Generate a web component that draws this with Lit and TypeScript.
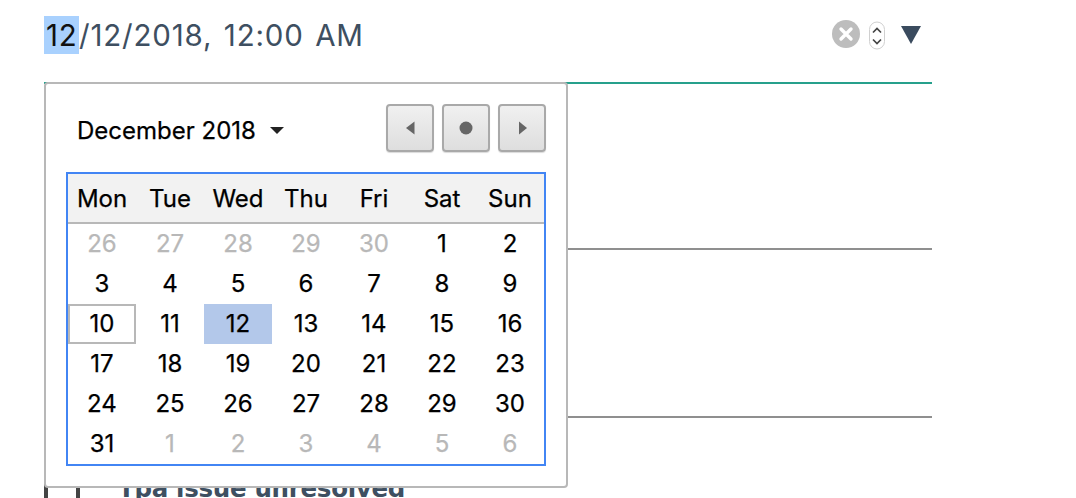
import { LitElement, html, css } from "lit";
import { customElement } from "lit/decorators.js";

const headers = ["Mon", "Tue", "Wed", "Thu", "Fri", "Sat", "Sun"];
const days: [number, boolean][] = [
  ...[26, 27, 28, 29, 30].map((d) => [d, true] as [number, boolean]),
  ...Array.from({ length: 31 }, (_, i) => [i + 1, false] as [number, boolean]),
  ...[1, 2, 3, 4, 5, 6].map((d) => [d, true] as [number, boolean]),
];

@customElement("app-root")
export class AppRoot extends LitElement {
  static styles = css`
    :host {
      display: block;
      position: relative;
      width: 1076px;
      height: 498px;
      overflow: hidden;
      background: #fff;
      font-family: "Inter", "Liberation Sans", sans-serif;
    }
    .page {
      margin-left: 44px;
      width: 888px;
      display: flex;
      flex-direction: column;
    }
    .field {
      height: 84px;
      box-sizing: border-box;
      border-bottom: 2px solid #26a08c;
      display: flex;
      align-items: flex-start;
      padding-top: 16px;
    }
    .value {
      font-size: 29.500px;
      line-height: 38px;
      color: #3e4f61;
      flex: 1;
      white-space: pre;
      letter-spacing: 0.8px;
    }
    .sel {
      background: #a9d1fe;
      color: #111;
      display: inline-block;
      padding: 0 1.500px 0 2px;
    }
    .gap {
      margin-left: 2.500px;
    }
    .controls {
      display: flex;
      align-items: center;
      height: 38px;
      margin-right: 11px;
    }
    .controls svg {
      display: block;
    }
    .clear {
      margin-right: 8px;
      margin-bottom: 2px;
    }
    .spin {
      margin-right: 15px;
      margin-top: 2px;
    }
    .line {
      height: 166px;
      border-bottom: 2px solid #8f8f8f;
    }
    .first {
      height: 164px;
    }
    .issue {
      height: 66px;
      display: flex;
      align-items: flex-end;
    }
    .check {
      width: 36px;
      height: 20px;
      box-sizing: border-box;
      margin-bottom: -14px;
      border-left: 4px solid #444;
      border-right: 4px solid #444;
      flex: none;
    }
    .issue b {
      margin-left: 38px;
      font-size: 24.500px;
      line-height: 28px;
      margin-bottom: -19px;
      color: #3e4f61;
      font-family: "DejaVu Sans", sans-serif;
      letter-spacing: -0.3px;
      white-space: nowrap;
    }
    .popup {
      position: absolute;
      left: 44px;
      top: 82px;
      width: 524px;
      height: 406px;
      box-sizing: border-box;
      background: #fff;
      border: 2px solid #b8b8b8;
      border-radius: 4px;
      padding: 20px;
      display: flex;
      flex-direction: column;
      color: #000;
      -webkit-text-stroke: 0.25px currentColor;
    }
    .top {
      height: 48px;
      display: flex;
      align-items: center;
      justify-content: space-between;
      margin-bottom: 20px;
    }
    .month {
      display: flex;
      align-items: center;
      gap: 14px;
      margin-left: 11px;
      padding-top: 4px;
      font-size: 24px;
    }
    .month i {
      width: 0;
      height: 0;
      border-left: 7px solid transparent;
      border-right: 7px solid transparent;
      border-top: 7px solid #222;
    }
    .nav {
      display: flex;
      gap: 8px;
    }
    .btn {
      width: 48px;
      height: 48px;
      box-sizing: border-box;
      border: 2px solid #a9a9a9;
      border-radius: 4px;
      background: linear-gradient(#f0f0f0, #dedede);
      box-shadow: 0 1px 1px rgba(0, 0, 0, 0.15);
      display: flex;
      align-items: center;
      justify-content: center;
    }
    .cal {
      width: 480px;
      box-sizing: border-box;
      border: 2px solid #4285f4;
    }
    .grid {
      display: grid;
      grid-template-columns: repeat(7, 68px);
    }
    .head {
      height: 50px;
      box-sizing: border-box;
      background: #f2f2f2;
      border-bottom: 2px solid #b8b8b8;
      align-items: center;
    }
    .head span,
    .d {
      text-align: center;
      font-size: 24px;
    }
    .d {
      height: 40px;
      line-height: 40px;
      box-sizing: border-box;
    }
    .out {
      color: #b8b8b8;
    }
    .today {
      line-height: 36px;
      border: 2px solid #b8b8b8;
    }
    .picked {
      background: #b3c8ea;
    }
  `;

  render() {
    return html`
      <div class="page">
        <div class="field">
          <div class="value"><span class="sel">12</span>/12/2018,<span class="gap"> 12:00</span><span class="gap"> AM</span></div>
          <div class="controls">
            <svg class="clear" width="28" height="28" viewBox="0 0 28 28">
              <circle cx="14" cy="14" r="14" fill="#bdbdbd" />
              <path d="M9 9l10 10M19 9L9 19" stroke="#fff" stroke-width="3.400" stroke-linecap="round" />
            </svg>
            <svg class="spin" width="18" height="30" viewBox="0 0 18 30">
              <rect x="1.500" y="1" width="15" height="27" rx="7.500" fill="#fff" stroke="#d0d0d0" />
              <path d="M5 11.500l4-4 4 4M5 18.500l4 4 4-4" fill="none" stroke="#444" stroke-width="1.700" />
            </svg>
            <svg width="20" height="18" viewBox="0 0 20 18">
              <path d="M0 0h20L10 18z" fill="#3a4b5e" />
            </svg>
          </div>
        </div>
        <div class="line first"></div>
        <div class="line"></div>
        <div class="issue">
          <div class="check"></div>
          <b>Tpa issue unresolved</b>
        </div>
      </div>
      <div class="popup">
        <div class="top">
          <div class="month">December 2018 <i></i></div>
          <div class="nav">
            <div class="btn">
              <svg width="10" height="16" viewBox="0 0 10 16"><path d="M9.500 1.500v13L1 8z" fill="#666" /></svg>
            </div>
            <div class="btn">
              <svg width="14" height="14" viewBox="0 0 14 14"><circle cx="7" cy="7" r="6.500" fill="#666" /></svg>
            </div>
            <div class="btn">
              <svg width="10" height="16" viewBox="0 0 10 16"><path d="M2 1.500v13l8-6.500z" fill="#666" /></svg>
            </div>
          </div>
        </div>
        <div class="cal">
          <div class="grid head">${headers.map((h) => html`<span>${h}</span>`)}</div>
          <div class="grid">
            ${days.map(([d, out]) => {
              const cls = out ? "out" : d === 10 ? "today" : d === 12 ? "picked" : "";
              return html`<div class="d ${cls}">${d}</div>`;
            })}
          </div>
        </div>
      </div>
    `;
  }
}
